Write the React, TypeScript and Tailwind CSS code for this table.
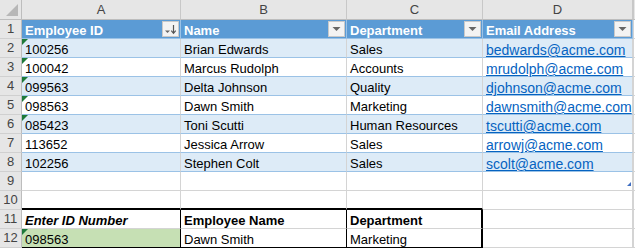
import React from "react";

interface Employee {
  id: string;
  name: string;
  dept: string;
  email: string;
  textNum: boolean;
}

const employees: Employee[] = [
  { id: "100256", name: "Brian Edwards", dept: "Sales", email: "bedwards@acme.com", textNum: true },
  { id: "100042", name: "Marcus Rudolph", dept: "Accounts", email: "mrudolph@acme.com", textNum: true },
  { id: "099563", name: "Delta Johnson", dept: "Quality", email: "djohnson@acme.com", textNum: true },
  { id: "098563", name: "Dawn Smith", dept: "Marketing", email: "dawnsmith@acme.com", textNum: true },
  { id: "085423", name: "Toni Scutti", dept: "Human Resources", email: "tscutti@acme.com", textNum: true },
  { id: "113652", name: "Jessica Arrow", dept: "Sales", email: "arrowj@acme.com", textNum: false },
  { id: "102256", name: "Stephen Colt", dept: "Sales", email: "scolt@acme.com", textNum: false },
];

const GRID = "grid grid-cols-[22px_159px_166px_136px_150px_2px]";

function RowNum({ n }: { n: number }) {
  return (
    <div className="h-[19px] bg-[#e6e6e6] border-r border-b border-r-[#bdbdbd] border-b-[#d0d0d0] flex items-center justify-center text-[13px] text-[#444]">
      {n}
    </div>
  );
}

function TextFlag() {
  return (
    <span className="absolute top-0 left-0 w-0 h-0 border-t-[6px] border-t-[#1d7a3a] border-r-[6px] border-r-transparent" />
  );
}

function Dropdown({ sorted }: { sorted?: boolean }) {
  return (
    <span className="absolute right-[1px] top-[1px] w-[17px] h-[16px] bg-[#f3f3f3] border border-[#c9c9c9] flex items-center justify-center">
      {sorted ? (
        <svg width="13" height="12" viewBox="0 0 13 12">
          <path d="M1 7.5h5l-2.5 2.5z" fill="#666" />
          <path d="M9.5 2v8" stroke="#555" strokeWidth="1.2" />
          <path d="M7.3 7.6l2.2 2.8 2.2-2.8" stroke="#555" strokeWidth="1.2" fill="none" />
        </svg>
      ) : (
        <svg width="9" height="6" viewBox="0 0 9 6">
          <path d="M0.5 1h8L4.5 5z" fill="#666" />
        </svg>
      )}
    </span>
  );
}

function Cell({
  children,
  className = "",
}: {
  children?: React.ReactNode;
  className?: string;
}) {
  return (
    <div className={`relative h-[19px] border-r border-b flex items-end pl-[3px] leading-[14px] whitespace-nowrap overflow-visible ${className}`}>
      {children}
    </div>
  );
}

export default function App() {
  return (
    <div className="w-[635px] h-[248px] overflow-hidden bg-white font-['Liberation_Sans',Arial,sans-serif] text-[13px] text-black">
      {/* column letters */}
      <div className={GRID}>
        <div className="relative h-[20px] bg-[#e6e6e6] border-r border-b border-r-[#bdbdbd] border-b-[#bdbdbd]">
          <span className="absolute right-[3px] bottom-[3px] w-0 h-0 border-l-[12px] border-l-transparent border-b-[12px] border-b-[#b7b7b7]" />
        </div>
        {["A", "B", "C", "D"].map((l) => (
          <div
            key={l}
            className="h-[20px] bg-[#e6e6e6] border-r border-b border-r-[#c8c8c8] border-b-[#bdbdbd] flex items-center justify-center text-[#444]"
          >
            {l}
          </div>
        ))}
        <div className="h-[20px] bg-[#e6e6e6] border-l border-b border-l-[#c8c8c8] border-b-[#bdbdbd]" />
      </div>

      {/* table header */}
      <div className={GRID}>
        <RowNum n={1} />
        {["Employee ID", "Name", "Department", "Email Address"].map((h, i) => (
          <Cell key={h} className="bg-[#5b9bd5] border-r-[#9bc2e6] border-b-[#9bc2e6] font-bold text-white">
            {h}
            <Dropdown sorted={i === 0} />
          </Cell>
        ))}
        <div className="h-[19px] border-l border-b border-[#d4d4d4]" />
      </div>

      {/* table rows */}
      {employees.map((e, i) => {
        const band = i % 2 === 0 ? "bg-[#ddebf7]" : "bg-white";
        const line = "border-r-[#d4d4d4] border-b-[#9bc2e6]";
        return (
          <div key={e.id + i} className={GRID}>
            <RowNum n={i + 2} />
            <Cell className={`${band} ${line}`}>
              {e.textNum && <TextFlag />}
              {e.id}
            </Cell>
            <Cell className={`${band} ${line}`}>{e.name}</Cell>
            <Cell className={`${band} ${line}`}>{e.dept}</Cell>
            <Cell className={`${band} ${line}`}>
              <a href="#" className="text-[14px] text-[#0563c1] underline underline-offset-[1px]">
                {e.email}
              </a>
            </Cell>
            <div className="h-[19px] border-l border-b border-[#d4d4d4]" />
          </div>
        );
      })}

      {/* rows 9 & 10 */}
      <div className={GRID}>
        <RowNum n={9} />
        <Cell className="border-[#d4d4d4]" />
        <Cell className="border-[#d4d4d4]" />
        <Cell className="border-[#d4d4d4]" />
        <Cell className="border-[#d4d4d4]">
          <span className="absolute right-[1px] top-[10px] w-0 h-0 border-l-[4px] border-l-transparent border-b-[4px] border-b-[#3f6ec2]" />
        </Cell>
        <div className="h-[19px] border-l border-b border-[#d4d4d4]" />
      </div>
      <div className={GRID}>
        <RowNum n={10} />
        <Cell className="border-r-[#d4d4d4] border-b-2 border-b-black" />
        <Cell className="border-r-[#d4d4d4] border-b-2 border-b-black" />
        <Cell className="border-r-[#d4d4d4] border-b-2 border-b-black" />
        <Cell className="border-[#d4d4d4]" />
        <div className="h-[19px] border-l border-b border-[#d4d4d4]" />
      </div>

      {/* lookup box */}
      <div className={GRID}>
        <RowNum n={11} />
        <Cell className="border-r-black border-b-[#d4d4d4] font-bold italic">Enter ID Number</Cell>
        <Cell className="border-r-black border-b-[#d4d4d4] font-bold">Employee Name</Cell>
        <Cell className="border-r-2 border-r-black border-b-[#d4d4d4] font-bold">Department</Cell>
        <Cell className="border-[#d4d4d4]" />
        <div className="h-[19px] border-l border-b border-[#d4d4d4]" />
      </div>
      <div className={GRID}>
        <RowNum n={12} />
        <Cell className="bg-[#c6e0b4] border-r-black border-b-black">
          <TextFlag />
          098563
        </Cell>
        <Cell className="border-r-black border-b-black">Dawn Smith</Cell>
        <Cell className="border-r-2 border-r-black border-b-black">Marketing</Cell>
        <Cell className="border-[#d4d4d4]" />
        <div className="h-[19px] border-l border-b border-[#d4d4d4]" />
      </div>
    </div>
  );
}
